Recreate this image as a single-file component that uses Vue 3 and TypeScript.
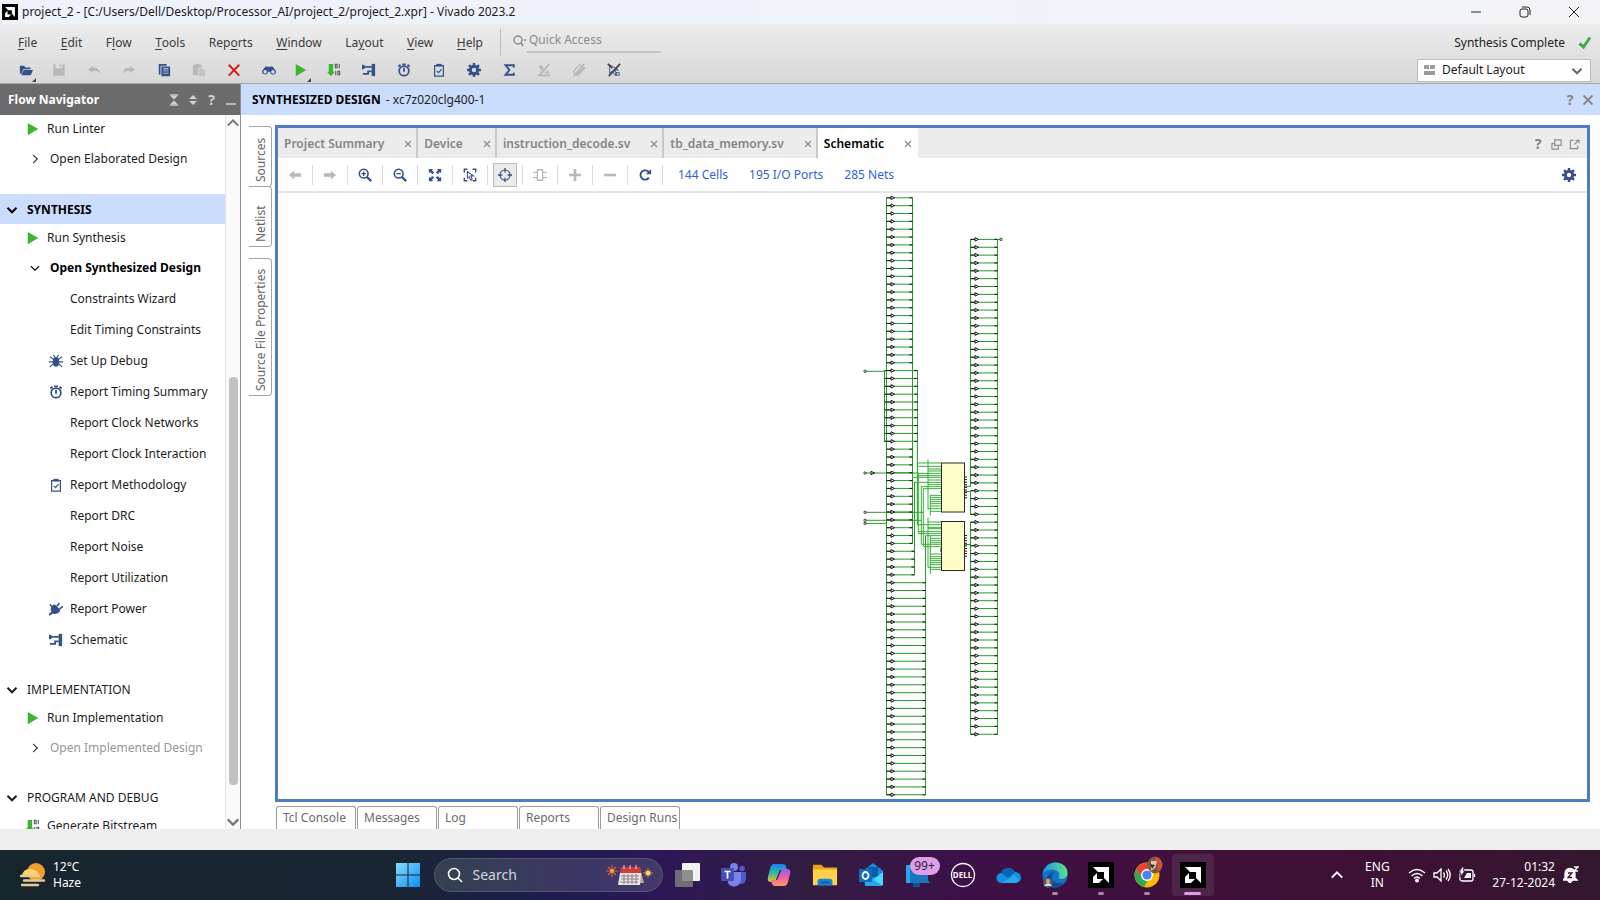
<script setup lang="ts">
import { ref } from 'vue'

interface MenuEntry { before: string; key: string; after: string }
interface ToolEntry { icon: string; label: string; tone: string; menu?: boolean }
interface NavItem { label: string; kind: string; icon?: string; tone?: string }
interface NavSection { title: string; active?: boolean; items: NavItem[] }
interface Wire { x: number; right: number; y: number; tri: number }

const menus: MenuEntry[] = [
  { before: '', key: 'F', after: 'ile' },
  { before: '', key: 'E', after: 'dit' },
  { before: 'F', key: 'l', after: 'ow' },
  { before: '', key: 'T', after: 'ools' },
  { before: 'Rep', key: 'o', after: 'rts' },
  { before: '', key: 'W', after: 'indow' },
  { before: 'La', key: 'y', after: 'out' },
  { before: '', key: 'V', after: 'iew' },
  { before: '', key: 'H', after: 'elp' },
]

const tools: ToolEntry[] = [
  { icon: 'folder', label: 'Open', tone: 'navy', menu: true },
  { icon: 'save', label: 'Save', tone: 'pale' },
  { icon: 'undo', label: 'Undo', tone: 'pale' },
  { icon: 'redo', label: 'Redo', tone: 'pale' },
  { icon: 'copy', label: 'Copy', tone: 'navy' },
  { icon: 'paste', label: 'Paste', tone: 'pale' },
  { icon: 'delete', label: 'Delete', tone: 'red' },
  { icon: 'find', label: 'Find', tone: 'navy' },
  { icon: 'play', label: 'Run', tone: 'green', menu: true },
  { icon: 'bits', label: 'Generate Bitstream', tone: 'green' },
  { icon: 'schematic', label: 'Schematic', tone: 'navy' },
  { icon: 'clock', label: 'Report Timing', tone: 'navy' },
  { icon: 'clipboard', label: 'Report Methodology', tone: 'navy' },
  { icon: 'gear', label: 'Settings', tone: 'navy' },
  { icon: 'sigma', label: 'Summary', tone: 'navy' },
  { icon: 'nomark', label: 'Unmark', tone: 'pale' },
  { icon: 'nohighlight', label: 'Unhighlight', tone: 'pale' },
  { icon: 'noselect', label: 'Unselect', tone: 'navy' },
]

const sections: NavSection[] = [
  { title: '', items: [
    { label: 'Run Linter', kind: 'run', icon: 'play', tone: 'green' },
    { label: 'Open Elaborated Design', kind: 'open', icon: 'right' },
  ] },
  { title: 'SYNTHESIS', active: true, items: [
    { label: 'Run Synthesis', kind: 'run', icon: 'play', tone: 'green' },
    { label: 'Open Synthesized Design', kind: 'open strong', icon: 'down' },
    { label: 'Constraints Wizard', kind: 'sub' },
    { label: 'Edit Timing Constraints', kind: 'sub' },
    { label: 'Set Up Debug', kind: 'sub', icon: 'bug', tone: 'navy' },
    { label: 'Report Timing Summary', kind: 'sub', icon: 'clock', tone: 'navy' },
    { label: 'Report Clock Networks', kind: 'sub' },
    { label: 'Report Clock Interaction', kind: 'sub' },
    { label: 'Report Methodology', kind: 'sub', icon: 'clipboard', tone: 'navy' },
    { label: 'Report DRC', kind: 'sub' },
    { label: 'Report Noise', kind: 'sub' },
    { label: 'Report Utilization', kind: 'sub' },
    { label: 'Report Power', kind: 'sub', icon: 'plug', tone: 'navy' },
    { label: 'Schematic', kind: 'sub', icon: 'schematic', tone: 'navy' },
  ] },
  { title: 'IMPLEMENTATION', items: [
    { label: 'Run Implementation', kind: 'run', icon: 'play', tone: 'green' },
    { label: 'Open Implemented Design', kind: 'open off', icon: 'right' },
  ] },
  { title: 'PROGRAM AND DEBUG', items: [
    { label: 'Generate Bitstream', kind: 'run', icon: 'bits', tone: 'green' },
  ] },
]

const sideTabs = ['Sources', 'Netlist', 'Source File Properties']
const docTabs = ['Project Summary', 'Device', 'instruction_decode.sv', 'tb_data_memory.sv', 'Schematic']
const activeTab = ref('Schematic')
const canvasTools: ToolEntry[] = [
  { icon: 'prev', label: 'Previous', tone: 'pale' },
  { icon: 'next', label: 'Next', tone: 'pale' },
  { icon: 'zoomin', label: 'Zoom In', tone: 'navy' },
  { icon: 'zoomout', label: 'Zoom Out', tone: 'navy' },
  { icon: 'fit', label: 'Zoom Fit', tone: 'navy' },
  { icon: 'fitsel', label: 'Zoom to Selection', tone: 'navy' },
  { icon: 'target', label: 'Autofit Selection', tone: 'navy' },
  { icon: 'cell', label: 'Expand Cone', tone: 'pale' },
  { icon: 'plus', label: 'Add', tone: 'pale' },
  { icon: 'minus', label: 'Remove', tone: 'pale' },
  { icon: 'reload', label: 'Regenerate', tone: 'navy' },
]
const counts = ['144 Cells', '195 I/O Ports', '285 Nets']
const bottomTabs = ['Tcl Console', 'Messages', 'Log', 'Reports', 'Design Runs']
const layout = ref('Default Layout')
const quick = ref('')
const query = ref('')

const apps = ['taskview', 'teams', 'copilot', 'explorer', 'outlook', 'feed', 'dell', 'onedrive', 'edge', 'amd', 'chrome', 'amd']
const running = [8, 9, 10]

/* Buffer rows: the right end depends on which net bundle the row joins. */
const pitch = 7.855
function leftEnd(i: number): number {
  if (i >= 22 && i <= 31) return 917.5
  if (i <= 44) return 912.5
  return i <= 48 ? 914.5 : 925.5
}
const leftRows: Wire[] = Array.from({ length: 77 }, (_, i) => ({
  x: i >= 22 && i <= 31 ? 884.5 : 886.5, right: leftEnd(i), y: 197.8 + i * pitch, tri: 891,
}))
const rightRows: Wire[] = Array.from({ length: 64 }, (_, i) => ({
  x: 970.5, right: 997.5, y: 239.4 + i * pitch, tri: 975,
}))
const rows = leftRows.concat(rightRows)
const pins = [0, 1, 2, 3, 4, 5, 6, 7, 8]

/* Bundle nets between the buffer columns and the two memory blocks: [from x, y]. */
const nets: number[][] = [
  [202, 69], [202, 79], [234, 87], [234, 93], [202, 100], [205, 107], [187, 112], [234, 120],
  [194, 127], [234, 134], [214, 140], [220, 146], [241, 166], [241, 172], [241, 178], [241, 185],
  [241, 191], [241, 198], [234, 206], [241, 214],
  [234, 246], [202, 254], [234, 262], [234, 266], [205, 275], [205, 281], [227, 287], [241, 295],
  [241, 302], [241, 308], [214, 313], [220, 320], [241, 342], [241, 350], [241, 356], [241, 362],
  [241, 368], [241, 374], [234, 382], [241, 388],
]
</script>

<template>
  <div class="screen">
    <svg class="defs" aria-hidden="true">
      <symbol id="folder" viewBox="0 0 16 16"><path d="M1 3h5l1 2h6v2H5l-2 5H1z" /><path d="M5.500 8H16l-2.500 6H2.500z" /></symbol>
      <symbol id="save" viewBox="0 0 16 16"><path d="M1.500 1.500h2.500v4.500h7.500v-4.500H14.500v13h-13z" /><path d="M8.500 1.500h2v3h-2z" /></symbol>
      <symbol id="undo" viewBox="0 0 16 16"><path d="M1 7l6-4v2.500c5 0 7.500 2 8 6.500-2-2.500-4-3-8-3V11.500z" /></symbol>
      <symbol id="redo" viewBox="0 0 16 16"><path d="M15 7L9 3v2.500c-5 0-7.500 2-8 6.500 2-2.500 4-3 8-3v2.500z" /></symbol>
      <symbol id="copy" viewBox="0 0 16 16"><path d="M2 1h9v2H4v10H2z" /><path d="M5 4h10v11H5zM7 6v1h6V6zm0 2.500v1h6v-1zM7 11v1h6v-1z" fill-rule="evenodd" /></symbol>
      <symbol id="paste" viewBox="0 0 16 16"><path d="M1 2h3V1h4v1h3v3H7v9H1z" /><path d="M8 6h4l3 3v6H8z" opacity=".7" /></symbol>
      <symbol id="delete" viewBox="0 0 16 16"><path d="M2 2l12 12.500M14 2L2 14.500" fill="none" stroke="currentColor" stroke-width="2.200" /></symbol>
      <symbol id="find" viewBox="0 0 16 16"><path d="M4 4h3l1 1 1-1h3l4 5a3.500 3.500 0 1 1-7 1H7a3.500 3.500 0 1 1-7-1zM3.500 8a2 2 0 1 0 .01 0zm9 0a2 2 0 1 0 .01 0z" fill-rule="evenodd" /></symbol>
      <symbol id="play" viewBox="0 0 16 16"><path d="M2 1l12 7-12 7z" /></symbol>
      <symbol id="bits" viewBox="0 0 16 16"><path d="M2 1h5v9h2l-4.500 5L0 10h2z" /><g fill="none" stroke="#555"><path d="M9.500 1.500h2v4h-2zM14 1v5M10 9v5M12.500 9.500h2v4h-2z" stroke-width="1.200" /></g></symbol>
      <symbol id="schematic" viewBox="0 0 16 16"><path d="M1 2l5 2.500L1 7z" /><path d="M11 1h4v14h-4z" /><path d="M1 2v5M5 4.500h6M1 12.500h6v-3h4" fill="none" stroke="currentColor" stroke-width="2" /></symbol>
      <symbol id="clock" viewBox="0 0 16 16"><circle cx="8" cy="9" r="5.500" fill="none" stroke="currentColor" stroke-width="2" /><path d="M8 5.500V10M6 1.500h4M1.500 4L4 2M14.500 4L12 2" fill="none" stroke="currentColor" stroke-width="2" /></symbol>
      <symbol id="clipboard" viewBox="0 0 16 16"><path d="M3 3h10v12H3z" fill="none" stroke="currentColor" stroke-width="1.400" /><path d="M5 1h6v3H5z" /><path d="M5.500 9l2 2 3.500-4" fill="none" stroke="currentColor" stroke-width="1.300" /></symbol>
      <symbol id="gear" viewBox="0 0 16 16"><circle cx="8" cy="8" r="4.200" fill="none" stroke="currentColor" stroke-width="3.400" /><path d="M8 0v3M8 13v3M0 8h3M13 8h3M2.300 2.300l2 2M11.700 11.700l2 2M13.700 2.300l-2 2M4.300 11.700l-2 2" stroke="currentColor" stroke-width="2.800" /></symbol>
      <symbol id="sigma" viewBox="0 0 16 16"><path d="M13.500 5V2.500H4L8.500 8 4 13.500h9.500V11" fill="none" stroke="currentColor" stroke-width="2.200" /></symbol>
      <symbol id="nomark" viewBox="0 0 16 16"><path d="M2 4l3-2 3 4-3 3zM1 13h14v2H1zM8 12l4-4 3 4z" /><path d="M2 15L14 1" stroke="currentColor" stroke-width="2" /></symbol>
      <symbol id="nohighlight" viewBox="0 0 16 16"><path d="M2 9l7-7 5 4-7 8-4-1z" fill="none" stroke="currentColor" stroke-width="1.600" /><path d="M2 15L14 1M6 13l8-8" stroke="currentColor" stroke-width="1.800" /></symbol>
      <symbol id="noselect" viewBox="0 0 16 16"><path d="M3 2v10l3-3 3 5 2-1-2-5h4z" fill="none" stroke="currentColor" /><path d="M10 11h4v3h-4z" fill="none" stroke="currentColor" /><path d="M2 15L15 1M1 1l5 5" stroke="#444" stroke-width="2" /></symbol>
      <symbol id="right" viewBox="0 0 16 16"><path d="M5.500 2.500L11 8l-5.500 5.500" fill="none" stroke="#333" stroke-width="1.500" /></symbol>
      <symbol id="down" viewBox="0 0 16 16"><path d="M2.500 5.500L8 11l5.500-5.500" fill="none" stroke="currentColor" stroke-width="1.600" /></symbol>
      <symbol id="downbold" viewBox="0 0 16 16"><path d="M2 5l6 6 6-6" fill="none" stroke="currentColor" stroke-width="2.600" /></symbol>
      <symbol id="up" viewBox="0 0 16 16"><path d="M2 11l6-6 6 6" fill="none" stroke="currentColor" stroke-width="2.300" /></symbol>
      <symbol id="bug" viewBox="0 0 16 16"><ellipse cx="8" cy="9" rx="3.700" ry="5.500" /><path d="M5 1l2 3M11 1L9 4M1 3l4 3M15 3l-4 3M0 9h16M1 15l4-4M15 15l-4-4" stroke="currentColor" stroke-width="1.200" /></symbol>
      <symbol id="plug" viewBox="0 0 16 16"><path d="M4 4c2-2 3-1 4 0l4 4c1 1 1 3-1 4-2 2-5 2-7 1l-2 2-1-1 2-3C1 9 2 6 4 4z" /><path d="M9 5l3-4M12 8l4-3M1 3l3 3M3 12l-3 3" stroke="currentColor" stroke-width="1.800" /></symbol>
      <symbol id="prev" viewBox="0 0 16 16"><path d="M1 8l6-5v3h8v4H7v3z" /></symbol>
      <symbol id="next" viewBox="0 0 16 16"><path d="M15 8L9 3v3H1v4h8v3z" /></symbol>
      <symbol id="zoomin" viewBox="0 0 16 16"><circle cx="6.500" cy="6.500" r="5" fill="none" stroke="currentColor" stroke-width="1.800" /><path d="M10 10l5 5" stroke="currentColor" stroke-width="2.600" /><path d="M4 6.500h5M6.500 4v5" stroke="currentColor" stroke-width="1.500" /></symbol>
      <symbol id="zoomout" viewBox="0 0 16 16"><circle cx="6.500" cy="6.500" r="5" fill="none" stroke="currentColor" stroke-width="1.800" /><path d="M10 10l5 5" stroke="currentColor" stroke-width="2.600" /><path d="M4 6.500h5" stroke="currentColor" stroke-width="1.500" /></symbol>
      <symbol id="fit" viewBox="0 0 16 16"><path d="M1 1h5L4.500 2.500 7 5 5 7 2.500 4.500 1 6zM15 1h-5l1.500 1.500L9 5l2 2 2.500-2.500L15 6zM1 15h5l-1.500-1.500L7 11 5 9l-2.500 2.500L1 10zM15 15h-5l1.500-1.500L9 11l2-2 2.500 2.500L15 10z" /></symbol>
      <symbol id="fitsel" viewBox="0 0 16 16"><path d="M1.500 5V1.500H5M11 1.500h3.500V5M1.500 11v3.500H5M11 14.500h3.500V11" fill="none" stroke="currentColor" stroke-width="1.600" /><path d="M5 4v7.500l2-1.500 2 4 1.500-1L9 9h3z" fill="none" stroke="currentColor" stroke-width="1.200" /></symbol>
      <symbol id="target" viewBox="0 0 16 16"><circle cx="8" cy="8" r="5.800" fill="none" stroke="currentColor" stroke-width="1.200" /><path d="M8 0v5M8 11v5M0 8h5M11 8h5" stroke="currentColor" stroke-width="1.500" /></symbol>
      <symbol id="cell" viewBox="0 0 16 16"><path d="M5 2h6v12H5zM0 5h5M0 11h5M11 5h5M11 11h5" fill="none" stroke="currentColor" stroke-width="1.500" /></symbol>
      <symbol id="plus" viewBox="0 0 16 16"><path d="M1 8h14M8 1v14" stroke="currentColor" stroke-width="3" /></symbol>
      <symbol id="minus" viewBox="0 0 16 16"><path d="M1 8h14" stroke="currentColor" stroke-width="3" /></symbol>
      <symbol id="reload" viewBox="0 0 16 16"><path d="M12.500 11a5.300 5.300 0 1 1 0-6" fill="none" stroke="currentColor" stroke-width="2.200" /><path d="M15 1v6H9z" /></symbol>
      <symbol id="close" viewBox="0 0 16 16"><path d="M2 2l12 12M14 2L2 14" stroke="currentColor" stroke-width="2.400" /></symbol>
      <symbol id="amd" viewBox="0 0 26 26"><path fill="#000" d="M0 0h26v26H0z" /><path fill="#fff" d="M5 5h16v16l-5-5v-6h-6z" /><path fill="#fff" d="M9 11v6h6l-4 4H5v-6z" /></symbol>
      <symbol id="taskview" viewBox="0 0 26 26"><rect x="8" y="1" width="18" height="18" rx="1" fill="#f2f2f2" /><rect x="1" y="8" width="18" height="17" rx="1" fill="#7d7d7d" opacity=".85" /></symbol>
      <symbol id="teams" viewBox="0 0 26 26"><circle cx="14" cy="5" r="4" fill="#7b83eb" /><circle cx="22" cy="6.500" r="2.800" fill="#5059c9" /><path d="M18 10h8v7a5 5 0 0 1-8 4z" fill="#5059c9" /><path d="M8 10h13v8a7 7 0 0 1-13 3z" fill="#7b83eb" /><rect x="1" y="6" width="13" height="13" rx="1" fill="#464eb8" /><path d="M4.500 9.500h6M7.500 9.500v7" stroke="#fff" stroke-width="1.700" /></symbol>
      <symbol id="copilot" viewBox="0 0 26 26"><path d="M8 2h9c3 0 3 3 4 6h-7L9 20H5c-5 0-3-5-2-9C4 6 5 2 8 2z" fill="url(#cop1)" /><path d="M18 24H9c-3 0-3-3-4-6h6l5-11h5c5 0 3 5 2 9-1 5-2 8-5 8z" fill="url(#cop2)" /></symbol>
      <symbol id="explorer" viewBox="0 0 28 26"><path d="M1 2h9l3 3h14v4H1z" fill="#e8a317" /><path d="M1 7h26v17H1z" fill="#ffd04c" /><path d="M6 24v-4c0-2 1-3 3-3h10c2 0 3 1 3 3v4z" fill="#1683d8" /><path d="M9 20h10v2H9z" fill="#0b5ea8" /></symbol>
      <symbol id="outlook" viewBox="0 0 26 26"><path d="M5 9l10-8 10 8v14H7z" fill="#1490df" /><path d="M10 5h10v10H10z" fill="#0a5dab" /><path d="M25 10v13H8z" fill="#50d9ff" /><path d="M7 12l18 12H7z" fill="#28a8ea" /><rect x="1" y="7" width="13" height="13" rx="1" fill="#0f6cbd" /><ellipse cx="7.500" cy="13.500" rx="3" ry="3.500" fill="none" stroke="#fff" stroke-width="1.800" /></symbol>
      <symbol id="feed" viewBox="0 0 26 26"><path d="M2 3h17v18H2z" fill="#2aa5e8" /><path d="M6 6h18v12l2 3H6z" fill="#1877be" /><path d="M9 21h7v4H9z" fill="#0d548f" /></symbol>
      <symbol id="dell" viewBox="0 0 26 26"><circle cx="13" cy="13" r="11.500" fill="none" stroke="#fff" stroke-width="1.300" /></symbol>
      <symbol id="onedrive" viewBox="0 0 26 26"><path d="M6 21a5 5 0 0 1-1-10 8 8 0 0 1 14-1 5.500 5.500 0 0 1 1 11z" fill="#1490df" /><path d="M5 11a8 8 0 0 1 14-1l-7 6z" fill="#0364b8" /><path d="M6 21l12-8 6 5-4 3z" fill="#28a8ea" /></symbol>
      <symbol id="edge" viewBox="0 0 26 26"><circle cx="13" cy="13" r="12.500" fill="#1474c4" /><path d="M1 11C3 3 9 .5 14 .5c7 0 12 5 11.500 11 0 4-4 6-8 5-2-1 0-2 0-4 0-4-9-8-16.500-1.500z" fill="url(#edg)" /><path d="M11 11c-4 5 1 12 11 10-5 7-16 4-17-4 0-4 3-7 8-7z" fill="#0c4b96" /><circle cx="6" cy="21" r="5" fill="#4d5968" /><circle cx="6" cy="19" r="2.200" fill="#c89f75" /><path d="M2 24q4-6 8 0z" fill="#d9dbe0" /></symbol>
      <symbol id="chrome" viewBox="0 0 26 26"><circle cx="13" cy="13" r="12.500" fill="#fbbc05" /><path d="M2.200 7a12.500 12.500 0 0 1 21.600 0H13L8 16z" fill="#ea4335" /><path d="M2.200 7l6 9 5 3-3 6A12.500 12.500 0 0 1 2.200 7z" fill="#34a853" /><circle cx="13" cy="13" r="6" fill="#fff" /><circle cx="13" cy="13" r="4.600" fill="#4285f4" /></symbol>
      <linearGradient id="cop1" x1="0" y1="0" x2="0" y2="1"><stop offset="0" stop-color="#1b7ff0" /><stop offset=".5" stop-color="#2fb9a0" /><stop offset="1" stop-color="#f3c11b" /></linearGradient>
      <linearGradient id="cop2" x1="0" y1="0" x2="0" y2="1"><stop offset="0" stop-color="#9b5cf0" /><stop offset=".5" stop-color="#ec5fa8" /><stop offset="1" stop-color="#fb9a5c" /></linearGradient>
      <linearGradient id="edg" x1="0" y1="0" x2="1" y2="0"><stop offset="0" stop-color="#1a9be0" /><stop offset="1" stop-color="#5ee08a" /></linearGradient>
      <linearGradient id="win" x1="0" y1="0" x2="1" y2="1"><stop offset="0" stop-color="#85dcff" /><stop offset="1" stop-color="#0f8df0" /></linearGradient>
    </svg>

    <header class="titlebar">
      <svg class="i16"><use href="#amd" /></svg>
      <h1>project_2 - [C:/Users/Dell/Desktop/Processor_AI/project_2/project_2.xpr] - Vivado 2023.2</h1>
      <button type="button" aria-label="Minimize"><svg viewBox="0 0 12 12"><path d="M1 6h10" /></svg></button>
      <button type="button" aria-label="Restore"><svg viewBox="0 0 12 12"><rect x="1" y="3" width="8" height="8" rx="2" /><path d="M3 1h5q3 0 3 3v5" /></svg></button>
      <button type="button" aria-label="Close"><svg viewBox="0 0 12 12"><path d="M1 1l10 10M11 1L1 11" /></svg></button>
    </header>

    <div class="chrome">
      <div class="menurow">
        <nav class="menus" aria-label="Main menu">
          <button v-for="m in menus" :key="m.key + m.after" type="button">{{ m.before }}<u>{{ m.key }}</u>{{ m.after }}</button>
        </nav>
        <label class="quick">
          <svg viewBox="0 0 14 12"><circle cx="5" cy="5" r="4" /><path d="M8 8l2 3M11 5h2" /></svg>
          <input v-model="quick" type="text" placeholder="Quick Access" aria-label="Quick Access">
        </label>
        <output class="status">Synthesis Complete</output>
        <svg class="tick" viewBox="0 0 14 14"><path d="M1.500 7.500l4 3.500L12 1.500" /></svg>
      </div>
      <div class="toolrow">
        <button v-for="t in tools" :key="t.icon" type="button" class="tool" :class="[t.tone, { menu: t.menu }]" :aria-label="t.label">
          <svg class="i14"><use :href="'#' + t.icon" /></svg>
          <i v-if="t.menu" class="corner"></i>
        </button>
        <label class="layout">
          <svg class="grid" viewBox="0 0 11 10"><path d="M0 0h5v4H0zM6 0h5v4H6zM0 6h11v4H0z" /></svg>
          <select v-model="layout" aria-label="Layout"><option>Default Layout</option></select>
          <svg class="i12 caret"><use href="#downbold" /></svg>
        </label>
      </div>
    </div>

    <main class="body">
      <aside class="navigator">
        <header class="navhead">
          <h2>Flow Navigator</h2>
          <button type="button" aria-label="Collapse all"><svg viewBox="0 0 10 12"><path d="M1 1h8M1 11h8" /><path class="solid" d="M1.500 2h7L5 5.500zM1.500 10h7L5 6.500z" /></svg></button>
          <button type="button" aria-label="Expand all"><svg viewBox="0 0 10 12"><path class="solid" d="M1 5h8L5 1zM1 7h8L5 11z" /></svg></button>
          <button type="button" class="q" aria-label="Help">?</button>
          <button type="button" aria-label="Minimize panel"><svg viewBox="0 0 10 12"><path d="M0 10h10" /></svg></button>
        </header>
        <div class="navbody">
          <div class="tree">
            <section v-for="s in sections" :key="s.title">
              <button v-if="s.title" type="button" class="sechead" :class="{ active: s.active }">
                <svg class="i12"><use href="#downbold" /></svg>{{ s.title }}
              </button>
              <ul>
                <li v-for="n in s.items" :key="n.label">
                  <button type="button" class="row" :class="n.kind">
                    <span class="slot" :class="n.tone"><svg v-if="n.icon" class="i14"><use :href="'#' + n.icon" /></svg></span>{{ n.label }}
                  </button>
                </li>
              </ul>
            </section>
          </div>
          <div class="scroll">
            <svg class="i14"><use href="#up" /></svg>
            <div class="track"><div class="thumb"></div></div>
            <svg class="i14"><use href="#downbold" /></svg>
          </div>
        </div>
      </aside>

      <section class="design">
        <header class="deshead">
          <h2>SYNTHESIZED DESIGN</h2><span>- xc7z020clg400-1</span>
          <button type="button" class="q" aria-label="Help">?</button>
          <button type="button" aria-label="Close design"><svg class="i12"><use href="#close" /></svg></button>
        </header>
        <div class="work">
          <div class="sidetabs">
            <button v-for="t in sideTabs" :key="t" type="button">{{ t }}</button>
          </div>
          <div class="center">
            <div class="panel">
              <div class="doctabs">
                <div v-for="t in docTabs" :key="t" class="doctab" :class="{ on: t === activeTab }">
                  <button type="button" class="name" @click="activeTab = t">{{ t }}</button>
                  <button type="button" class="x" :aria-label="'Close ' + t"><svg class="i8"><use href="#close" /></svg></button>
                </div>
                <div class="paneltools">
                  <button type="button" class="q" aria-label="Help">?</button>
                  <button type="button" aria-label="Float"><svg viewBox="0 0 12 12"><path d="M4 1h7v6H4zM4 5H1v6h7V8" /></svg></button>
                  <button type="button" aria-label="Maximize"><svg viewBox="0 0 12 12"><path d="M5 1.500H1.500v9h8V7M7 1.500h4v3M6 6l4-4" /></svg></button>
                </div>
              </div>
              <div class="canvastools">
                <span v-for="t in canvasTools" :key="t.icon" class="cell">
                  <button type="button" :class="[t.tone, { pressed: t.icon === 'target' }]" :aria-label="t.label"><svg class="i14"><use :href="'#' + t.icon" /></svg></button>
                </span>
                <a v-for="c in counts" :key="c" href="#">{{ c }}</a>
                <button type="button" class="navy settings" aria-label="Schematic settings"><svg class="i14"><use href="#gear" /></svg></button>
              </div>
              <div class="canvas">
                <svg viewBox="863 193 140 606" role="img" aria-label="Schematic">
                  <g class="green">
                    <path d="M886.500 197.800V794.800M912.500 197.800V543.500M917.500 371v154M884.500 371v71M914.500 482v93M925.500 535.500v259" />
                    <path d="M970.500 239.400v247h-5M965 491.500h5.500v23.500M970.500 522v212.300M965 544.500h5.500M997.500 239.400v495" />
                    <path d="M866 371.300h19M866 473h51M866 512.300h57M866 520.300h55M866 523.400h20M998 239.400h3" />
                    <path v-for="(r, i) in rows" :key="i" :d="`M${r.x} ${r.y}H${r.right}`" />
                  </g>
                  <g class="dark">
                    <path v-for="(r, i) in rows" :key="i" :d="`M${r.x} ${r.y}H${r.tri}M${r.right - 3} ${r.y}h3`" />
                    <path v-for="(r, i) in rows" :key="'t' + i" class="tri" :d="`M${r.tri} ${r.y - 1.7}l3.500 1.700l-3.500 1.700z`" />
                    <path class="tri" d="M871 471.300l3.500 1.700l-3.500 1.700z" />
                    <path class="port" d="M864 370.300h2v2h-2zM864 472h2v2h-2zM864 511.300h2v2h-2zM864 519.300h2v2h-2zM864 522.400h2v2h-2zM1000 238.400h2v2h-2z" />
                  </g>
                  <g class="bundle" transform="translate(850 440) scale(.3333)">
                    <path v-for="(n, i) in nets" :key="i" :d="`M${n[0]} ${n[1]}H274`" />
                    <path d="M234 58v150M241 165v62M205 98v183M214 140v173M220 146v174M202 4v250M234 232v150M241 288v114" />
                  </g>
                  <rect class="block" x="941.500" y="463" width="23" height="49" />
                  <rect class="block" x="941.500" y="521.500" width="23" height="49" />
                  <g class="dark">
                    <path v-for="p in pins" :key="p" :d="`M965 ${477 + p * 2.6}h2M965 ${535.5 + p * 2.6}h2`" />
                    <path d="M940 492h1M940 549h1M940 551h1" />
                  </g>
                </svg>
              </div>
            </div>
            <div class="bottomtabs">
              <button v-for="t in bottomTabs" :key="t" type="button">{{ t }}</button>
            </div>
          </div>
        </div>
      </section>
    </main>

    <div class="statusbar"></div>

    <footer class="taskbar">
      <button type="button" class="weather">
        <svg viewBox="0 0 28 26"><circle cx="17" cy="10" r="9" fill="#f2a02c" /><path d="M3 13q2-7 9-6 8 1 8 8z" fill="#ffd36b" /><g fill="none" stroke="#e8c99a" stroke-width="2.400" stroke-linecap="round"><path d="M2 14h18M5 18.500h20M3 23h16" /></g></svg>
        <span>12°C<br>Haze</span>
      </button>
      <div class="middle">
        <button type="button" class="start" aria-label="Start"><svg viewBox="0 0 24 24"><path fill="url(#win)" d="M0 0h11.500v11.500H0zM12.500 0H24v11.500H12.500zM0 12.500h11.500V24H0zM12.500 12.500H24V24H12.500z" /></svg></button>
        <label class="search">
          <svg class="mag" viewBox="0 0 16 16"><circle cx="7" cy="7" r="5.500" /><path d="M11 11l4 4" /></svg>
          <input v-model="query" type="text" placeholder="Search" aria-label="Search">
          <svg class="cal" viewBox="0 0 48 24">
            <path d="M6 2v12M0 8h12M2 4l8 8M10 4l-8 8" stroke="#d9602f" stroke-width="1.200" /><circle cx="6" cy="8" r="2" fill="#f2a43a" />
            <path d="M34 5l4 15h-6z" fill="#b9a9a0" /><path d="M15 4h19l1 6H14z" fill="#d23b3b" /><path d="M14 10h21l-1 12H12z" fill="#eee7e7" />
            <path d="M15 13h18M15 16h18M14 19h18M18 11v10M22 11v10M26 11v10M30 11v10" stroke="#8d7f88" /><path d="M18 2v4M24 2v4M30 2v4" stroke="#ddd" />
            <path d="M42 5v10M37 10h10M39 7l6 6M45 7l-6 6" stroke="#c9822f" /><circle cx="42" cy="10" r="2.500" fill="#ffd25a" />
          </svg>
        </label>
        <div class="apps">
          <button v-for="(a, i) in apps" :key="i" type="button" class="app" :class="{ current: i === 11, running: running.includes(i) }" :aria-label="a">
            <svg class="i26"><use :href="'#' + a" /></svg>
            <span v-if="a === 'feed'" class="badge">99+</span>
            <span v-if="a === 'dell'" class="delltext">DELL</span>
            <svg v-if="a === 'chrome'" class="avatar" viewBox="0 0 16 18"><ellipse cx="8" cy="9" rx="7.500" ry="8.500" fill="#7c5a45" /><path d="M8 1q8 1 7 10l-4 5z" fill="#cc5236" /><path d="M4 5h6l-2 7-4 3z" fill="#d9c9b5" /><path d="M3 8l5 1-3 4z" fill="#40342e" /></svg>
          </button>
        </div>
      </div>
      <div class="tray">
        <button type="button" aria-label="Hidden icons" class="chev"><svg class="i14"><use href="#up" /></svg></button>
        <button type="button" class="lang">ENG<br>IN</button>
        <button type="button" class="sys" aria-label="Network, volume and battery">
          <svg viewBox="0 0 18 16"><path d="M1 6q8-7 16 0M3.500 9q5.500-5 11 0M6 11.500q3-3 6 0" /><circle cx="9" cy="13.500" r="1.300" fill="#fff" /></svg>
          <svg viewBox="0 0 18 16"><path d="M1 6h3l4-4v12l-4-4H1zM10.500 5.500q2 2.500 0 5M13 3.500q3.500 4.500 0 9M15 2q4.500 6 0 12" /></svg>
          <svg viewBox="0 0 18 16"><rect x="2" y="3" width="13" height="11" rx="2" /><path d="M16.500 7v3" /><path d="M9 6h4v5H6z" fill="#fff" stroke="none" /><path d="M4 0L1 6h2l-1 4 5-6H5l1-4z" fill="#fff" stroke="#3a1333" stroke-width=".8" /></svg>
        </button>
        <button type="button" class="time">01:32<br>27-12-2024</button>
        <button type="button" class="bell" aria-label="Notifications"><svg viewBox="0 0 16 18"><path d="M2 12V8q0-5 5-5.500Q12 3 12 8v4l2 2H0zM5 15h4q-2 3-4 0z" fill="#fff" stroke="#fff" /><path d="M5 7h4l-4 4.500h4" stroke="#3a1333" /><path d="M11 1h4l-4 4h4" /></svg></button>
      </div>
    </footer>
  </div>
</template>

<style>
body { margin: 0; }
</style>

<style scoped>
* { box-sizing: border-box; }
.screen { display: flex; flex-direction: column; height: 100vh; overflow: hidden; background: #fff; color: #1c1c1c; font: 12px/16px "Noto Sans", "Open Sans", sans-serif; }
button, input, select { font: inherit; color: inherit; border: 0; background: none; padding: 0; margin: 0; outline: none; }
button { display: inline-flex; align-items: center; justify-content: center; white-space: pre; flex: none; }
h1, h2, ul { margin: 0; padding: 0; font-size: inherit; list-style: none; }
svg { display: block; fill: currentColor; flex: none; }
.defs { position: absolute; width: 0; height: 0; }
.i8 { width: 8px; height: 8px; }
.i12 { width: 12px; height: 12px; }
.i14 { width: 14px; height: 14px; }
.i16 { width: 16px; height: 16px; }
.i26 { width: 26px; height: 26px; }
.navy { color: #34508a; }
.pale { color: #b9b9b9; }
.red { color: #dd1717; }
.green { color: #3fb431; }
.q { font-weight: 700; font-size: 14px; }

.titlebar { display: flex; align-items: center; flex: none; height: 24px; padding: 0 2px; background: linear-gradient(90deg, #edf2fb, #eff3fa 60%, #f3f3f5); }
.titlebar h1 { flex: 1; margin-left: 4px; font-weight: 400; }
.titlebar button { width: 49px; height: 24px; }
.titlebar button svg { width: 12px; height: 12px; fill: none; stroke: #222; }

.chrome { flex: none; height: 60px; background: linear-gradient(#ececec, #d8d8d8); border-bottom: 1px solid #a3a6a8; }
.menurow { display: flex; align-items: center; height: 33px; padding: 4px 8px 0 18px; }
.menus { display: flex; justify-content: space-between; width: 465px; color: #3a3a3a; }
.menus button { height: 26px; }
.menus u { text-underline-offset: 2px; }
.quick { display: flex; align-items: center; width: 161px; height: 27px; margin-left: 17px; padding-left: 12px; padding-bottom: 4px; border-left: 1px solid #bbb; }
.quick svg { width: 14px; height: 12px; fill: none; stroke: #8b8b8b; stroke-width: 1.500; }
.quick input { width: 134px; height: 24px; border-bottom: 2px solid #c4c4c4; color: #8b8b8b; text-indent: 2px; }
.quick input::placeholder, .search input::placeholder { color: inherit; opacity: 1; }
.status { margin-left: auto; color: #222; }
.tick { width: 14px; height: 14px; margin-left: 13px; fill: none; stroke: #3fac49; stroke-width: 3; }
.toolrow { display: flex; align-items: center; height: 26px; padding: 0 9px 0 11px; }
.tool { position: relative; width: 35px; height: 26px; }
.tool.menu { width: 30px; }
.corner { position: absolute; right: 5px; bottom: 1px; border: 2px solid transparent; border-right-color: #444; border-bottom-color: #444; }
.layout { position: relative; display: flex; align-items: center; width: 174px; height: 23px; margin-left: auto; border: 1px solid #bdbdbd; background: #fff; }
.layout .grid { width: 11px; height: 10px; margin: 0 7px 0 6px; color: #9b9b9b; }
.layout select { flex: 1; appearance: none; }
.caret { position: absolute; right: 7px; top: 5px; color: #666; }

.body { display: flex; flex: 1; min-height: 0; }
.navigator { display: flex; flex-direction: column; flex: none; width: 241px; border-right: 1px solid #8f8f8f; }
.navhead { display: flex; align-items: center; flex: none; height: 31px; padding: 0 0 0 8px; background: #6b6b6b; color: #fff; }
.navhead h2 { flex: 1; }
.navhead button { width: 19px; color: #d2d2d2; }
.navhead svg { width: 10px; height: 12px; fill: none; stroke: currentColor; stroke-width: 1.500; }
.navhead .solid { fill: currentColor; stroke: none; }
.navbody { display: flex; flex: 1; min-height: 0; }
.tree { flex: 1; overflow: hidden; }
.tree section { padding-bottom: 19px; }
.tree section:first-child { padding-bottom: 20px; }
.sechead, .row { display: flex; justify-content: flex-start; width: 100%; }
.sechead { height: 30px; padding: 1px 0 0 6px; gap: 9px; }
.sechead.active { background: #cbddfd; font-weight: 700; color: #000; }
.row { height: 31px; padding-left: 29px; }
.row.run { height: 28px; padding-left: 26px; }
.row.sub { padding-left: 49px; }
.slot { width: 21px; }
.row.open .slot svg { width: 12px; height: 12px; }
.row.strong { font-weight: 700; color: #000; }
.row.off { color: #969696; }
.scroll { display: flex; flex-direction: column; align-items: center; width: 15px; padding: 1px 0 0; border-left: 1px solid #e3e3e3; color: #777; background: #fafafa; }
.track { display: flex; flex: 1; flex-direction: column; width: 9px; }
.track::before { content: ""; flex: 247; }
.thumb { flex: 408; border-radius: 4px; background: #c1c1c1; }
.track::after { content: ""; flex: 30; }

.design { display: flex; flex-direction: column; flex: 1; min-width: 0; }
.deshead { display: flex; align-items: center; flex: none; height: 31px; padding: 0 3px 0 11px; background: #cbddfd; }
.deshead h2 { color: #000; margin-right: 5px; }
.deshead span { flex: 1; }
.deshead button { width: 18px; color: #858585; }
.work { display: flex; flex: 1; min-height: 0; padding: 10px 10px 0 8px; }
.sidetabs { display: flex; flex-direction: column; width: 23px; color: #666; padding-top: 1px; }
.sidetabs button { writing-mode: vertical-rl; rotate: 180deg; justify-content: flex-start; width: 23px; height: 61px; margin-bottom: -1px; padding: 4px 2px 0 0; border: 1px solid #a5a5a5; border-right: 0; border-radius: 4px 0 0 4px; }
.sidetabs button:last-child { height: 138px; margin-top: 12px; }
.center { display: flex; flex-direction: column; flex: 1; min-width: 0; margin-left: 3px; }
.panel { display: flex; flex-direction: column; flex: 1; min-height: 0; border: 3px solid #4f7cc4; }
.doctabs { display: flex; flex: none; height: 30px; background: #ececec; color: #858585; font-weight: 600; }
.doctab { display: flex; align-items: center; padding: 2px 4px 0 6px; border-right: 2px solid #c9c9c9; }
.doctab .x { width: 8px; margin-left: 20px; color: #8c8c8c; }
.doctab.on { background: #fff; color: #000; border: 0; padding-right: 6px; }
.paneltools { display: flex; margin-left: auto; padding: 2px 4px 0 0; }
.paneltools button { width: 18px; color: #808080; }
.paneltools svg { width: 11px; height: 11px; fill: none; stroke: #8a8a8a; stroke-width: 1.200; }
.canvastools { display: flex; align-items: center; flex: none; height: 35px; padding-top: 1px; border-bottom: 2px solid #e5e5e5; }
.cell { display: flex; align-items: center; justify-content: center; width: 35px; height: 20px; border-right: 1px solid #dcdcdc; }
.cell button { width: 24px; height: 24px; }
.cell .pressed { border: 1px solid #bcbcbc; background: #ebebeb; }
.canvastools a { margin-left: 15px; margin-right: 6px; color: #2f62d9; text-decoration: none; }
.settings { margin-left: auto; margin-right: 11px; }
.canvas { flex: 1; min-height: 0; display: flex; justify-content: center; }
.canvas svg { height: 100%; }
.canvas .green, .bundle { fill: none; stroke: #289a28; stroke-width: 1; }
.canvas .bundle { stroke: #35b135; stroke-width: 3; }
.dark { fill: none; stroke: #151515; }
.tri { fill: #fff; }
.port { fill: #fff; stroke-width: .7; }
.block { fill: #ffffcb; stroke: #2b2a1c; }
.bottomtabs { display: flex; flex: none; gap: 1px; height: 27px; padding: 4px 0 0 1px; color: #6b6b6b; }
.bottomtabs button { width: 80px; padding-left: 6px; justify-content: flex-start; border: 1px solid #9c9c9c; border-bottom: 0; border-radius: 3px 3px 0 0; }

.statusbar { flex: none; height: 21px; background: #eee; }

.taskbar { display: grid; grid-template-columns: 1fr auto 1fr; align-items: center; flex: none; height: 50px; color: #fff; background: linear-gradient(90deg, #17252c 0%, #1a2632 24%, #1d1d50 35%, #2c1757 41%, #321d42 50%, #3c1148 60%, #40103a 75%, #3c1133 87%, #33172d 100%); }
.weather { justify-self: start; gap: 6px; padding-left: 19px; text-align: left; }
.weather svg { width: 28px; height: 26px; }
.middle { display: flex; align-items: center; padding-left: 9px; }
.start svg { width: 24px; height: 24px; }
.search { display: flex; align-items: center; width: 229px; height: 34px; margin-left: 14px; padding: 0 8px 0 12px; border: 1px solid #56566f; border-radius: 17px; background: linear-gradient(90deg, #33414f, #3b3768 70%, #443969); }
.search .mag { width: 16px; height: 16px; fill: none; stroke: #fff; stroke-width: 1.500; }
.search input { flex: 1; min-width: 0; margin-left: 10px; font-size: 14px; color: #d5d6df; }
.search .cal { width: 48px; height: 24px; }
.apps { display: flex; gap: 4px; margin-left: 3px; }
.app { position: relative; width: 42px; height: 42px; border-radius: 4px; }
.app.current { background: #4c2549; }
.app.current::after, .app.running::after { content: ""; position: absolute; bottom: 1px; width: 6px; height: 3px; border-radius: 2px; background: #a08da5; }
.app.current::after { width: 17px; background: #dc9fe4; }
.badge { position: absolute; left: 14px; top: 3px; width: 30px; height: 18px; border-radius: 9px; background: #df9fe8; color: #33203a; line-height: 17px; }
.delltext { position: absolute; inset: 0; font-size: 8px; font-weight: 700; line-height: 42px; }
.avatar { position: absolute; left: 21px; top: 2px; width: 16px; height: 18px; }
.tray { display: flex; align-items: center; justify-self: end; }
.tray svg { fill: none; stroke: #fff; stroke-width: 1.300; }
.chev { width: 16px; }
.lang { width: 28px; margin-left: 18px; }
.sys { gap: 7px; margin-left: 17px; }
.sys svg { width: 18px; height: 16px; }
.time { margin-left: 16px; text-align: right; }
.bell { margin-left: 8px; padding-right: 21px; }
.bell svg { width: 16px; height: 18px; }
</style>
